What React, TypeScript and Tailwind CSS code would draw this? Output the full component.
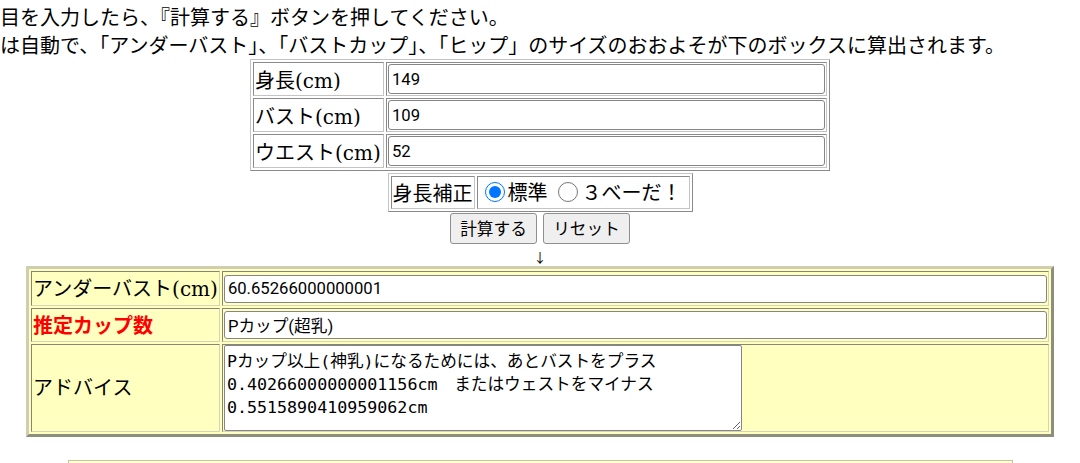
export default function App() {
  const labelFont = { fontFamily: '"DejaVu Serif", "Noto Sans CJK JP", serif' };

  return (
    <div className="min-h-screen bg-white text-black overflow-hidden" style={{ fontFamily: '"Noto Sans CJK JP", sans-serif' }}>
      {/* Intro text */}
      <div className="pt-[3px] text-[20px] leading-[28px] whitespace-nowrap">
        <p>目を入力したら、『計算する』ボタンを押してください。</p>
        <p>は自動で、「アンダーバスト」、「バストカップ」、「ヒップ」のサイズのおおよそが下のボックスに算出されます。</p>
      </div>

      {/* Input table */}
      <table
        className="mx-auto border-separate border-spacing-[2px] border border-t-[#c4c4c4] border-l-[#c4c4c4] border-r-[#8a8a8a] border-b-[#8a8a8a] text-[20px]"
        style={labelFont}
      >
        <tbody>
          {[
            { label: '身長(cm)', value: '149' },
            { label: 'バスト(cm)', value: '109' },
            { label: 'ウエスト(cm)', value: '52' },
          ].map((row) => (
            <tr key={row.label}>
              <td className="w-[131px] h-[34px] px-[1px] pt-[3px] pb-0 border border-t-[#8a8a8a] border-l-[#8a8a8a] border-r-[#c4c4c4] border-b-[#c4c4c4] leading-[28px] whitespace-nowrap">
                {row.label}
              </td>
              <td className="w-[441px] h-[34px] p-[1px] border border-t-[#8a8a8a] border-l-[#8a8a8a] border-r-[#c4c4c4] border-b-[#c4c4c4]">
                <input
                  readOnly
                  defaultValue={row.value}
                  className="block w-[437px] h-[30px] px-[3px] bg-white border border-[#858585] rounded-[3px] text-[16.67px] outline-none"
                  style={{ fontFamily: 'Roboto, "Noto Sans CJK JP", sans-serif' }}
                />
              </td>
            </tr>
          ))}
        </tbody>
      </table>

      {/* Height correction */}
      <table className="mx-auto mt-[2px] border-separate border-spacing-[2px] border border-t-[#c4c4c4] border-l-[#c4c4c4] border-r-[#8a8a8a] border-b-[#8a8a8a] text-[20px]">
        <tbody>
          <tr>
            <td className="h-[33px] px-[1px] border border-t-[#8a8a8a] border-l-[#8a8a8a] border-r-[#c4c4c4] border-b-[#c4c4c4] leading-[29px] whitespace-nowrap">
              身長補正
            </td>
            <td className="h-[33px] pl-[1px] pr-[7px] border border-t-[#8a8a8a] border-l-[#8a8a8a] border-r-[#c4c4c4] border-b-[#c4c4c4] leading-[29px] whitespace-nowrap">
              <label className="inline-flex items-center">
                <input type="radio" name="hosei" defaultChecked className="w-[20px] h-[20px] ml-[6px] mr-[3px]" />
                標準
              </label>
              <label className="inline-flex items-center ml-[4px]">
                <input type="radio" name="hosei" className="w-[20px] h-[20px] ml-[6px] mr-[4px]" />
                ３べーだ！
              </label>
            </td>
          </tr>
        </tbody>
      </table>

      {/* Buttons */}
      <div className="flex justify-center gap-[6px] mt-[1px]">
        <button className="h-[31px] w-[87px] bg-[#efefef] border border-[#8f8f8f] rounded-[3px] text-[16.67px]">計算する</button>
        <button className="h-[31px] w-[87px] bg-[#efefef] border border-[#8f8f8f] rounded-[3px] text-[16.67px]">リセット</button>
      </div>
      <div className="text-center text-[13px] leading-[22px] pt-[2px] -mb-[2px]">↓</div>

      {/* Result table */}
      <table
        className="mx-auto border-separate border-spacing-[2px] border-[3px] border-t-[#cfcfb0] border-l-[#cfcfb0] border-r-[#8e8e7c] border-b-[#8e8e7c] bg-[#ffffbf] text-[20px]"
        style={labelFont}
      >
        <tbody>
          <tr>
            <td className="w-[188px] h-[35px] px-[1px] pt-[2px] pb-0 border border-t-[#85857a] border-l-[#85857a] border-r-[#d4d4b8] border-b-[#d4d4b8] leading-[29px] whitespace-nowrap">
              アンダーバスト(cm)
            </td>
            <td className="w-[826px] h-[35px] p-[1px] border border-t-[#85857a] border-l-[#85857a] border-r-[#d4d4b8] border-b-[#d4d4b8]">
              <input
                readOnly
                defaultValue="60.65266000000001"
                className="block w-[823px] h-[28px] px-[3px] bg-white border border-[#858585] rounded-[3px] text-[16.67px] outline-none"
                style={{ fontFamily: 'Roboto, "Noto Sans CJK JP", sans-serif' }}
              />
            </td>
          </tr>
          <tr>
            <td className="h-[34px] px-[1px] pt-[2px] pb-0 border border-t-[#85857a] border-l-[#85857a] border-r-[#d4d4b8] border-b-[#d4d4b8] leading-[29px] whitespace-nowrap font-bold text-[#ff0000]">
              推定カップ数
            </td>
            <td className="h-[34px] p-[1px] border border-t-[#85857a] border-l-[#85857a] border-r-[#d4d4b8] border-b-[#d4d4b8]">
              <input
                readOnly
                defaultValue="Pカップ(超乳)"
                className="block w-[823px] h-[28px] px-[3px] bg-white border border-[#858585] rounded-[3px] text-[16.67px] outline-none"
                style={{ fontFamily: 'Roboto, "Noto Sans CJK JP", sans-serif' }}
              />
            </td>
          </tr>
          <tr>
            <td className="h-[88px] p-[1px] border border-t-[#85857a] border-l-[#85857a] border-r-[#d4d4b8] border-b-[#d4d4b8] leading-[29px] whitespace-nowrap">
              アドバイス
            </td>
            <td className="h-[88px] pl-[1px] py-0 align-top border border-t-[#85857a] border-l-[#85857a] border-r-[#d4d4b8] border-b-[#d4d4b8]">
              <textarea
                readOnly
                defaultValue={'Pカップ以上(神乳)になるためには、あとバストをプラス\n0.40266000000001156cm　またはウェストをマイナス\n0.5515890410959062cm'}
                className="block w-[518px] h-[86px] px-[2px] pt-[4px] pb-0 bg-white border border-[#858585] rounded-[2px] text-[16.67px] leading-[23px] outline-none whitespace-pre"
                style={{ fontFamily: '"DejaVu Sans Mono", "Noto Sans CJK JP", monospace' }}
              />
            </td>
          </tr>
        </tbody>
      </table>

      {/* Next box (cut off) */}
      <div className="mx-auto mt-[23px] w-[945px] h-[20px] border border-[#c4c4a4] bg-[#ffffcf]" />
    </div>
  );
}
